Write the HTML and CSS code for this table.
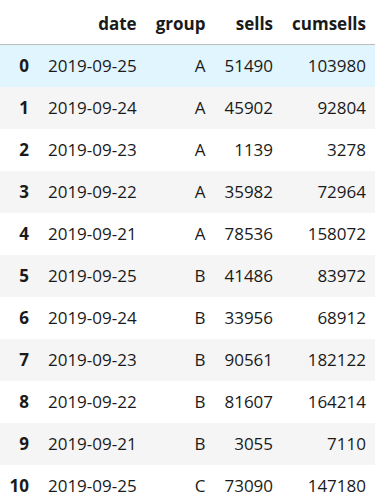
FILE: index.html
```html
<!DOCTYPE html>
<html>
<head>
<meta charset="utf-8">
<link rel="stylesheet" href="styles.css">
</head>
<body>
<table class="df">
  <thead>
    <tr><th></th><th>date</th><th>group</th><th>sells</th><th>cumsells</th></tr>
  </thead>
  <tbody>
    <tr class="hover"><th>0</th><td>2019-09-25</td><td>A</td><td>51490</td><td>103980</td></tr>
    <tr><th>1</th><td>2019-09-24</td><td>A</td><td>45902</td><td>92804</td></tr>
    <tr><th>2</th><td>2019-09-23</td><td>A</td><td>1139</td><td>3278</td></tr>
    <tr><th>3</th><td>2019-09-22</td><td>A</td><td>35982</td><td>72964</td></tr>
    <tr><th>4</th><td>2019-09-21</td><td>A</td><td>78536</td><td>158072</td></tr>
    <tr><th>5</th><td>2019-09-25</td><td>B</td><td>41486</td><td>83972</td></tr>
    <tr><th>6</th><td>2019-09-24</td><td>B</td><td>33956</td><td>68912</td></tr>
    <tr><th>7</th><td>2019-09-23</td><td>B</td><td>90561</td><td>182122</td></tr>
    <tr><th>8</th><td>2019-09-22</td><td>B</td><td>81607</td><td>164214</td></tr>
    <tr><th>9</th><td>2019-09-21</td><td>B</td><td>3055</td><td>7110</td></tr>
    <tr><th>10</th><td>2019-09-25</td><td>C</td><td>73090</td><td>147180</td></tr>
  </tbody>
</table>
</body>
</html>
```
FILE: styles.css
```css
html, body {
  margin: 0;
  padding: 0;
  background: #ffffff;
}
.df {
  border-collapse: collapse;
  border-spacing: 0;
  font-family: "Open Sans", "Noto Sans", sans-serif;
  font-size: 17px;
  color: #1a1a1a;
}
.df th, .df td {
  text-align: right;
  padding: 10px 9.5px;
  line-height: 22px;
  white-space: nowrap;
  vertical-align: middle;
}
.df th {
  font-weight: bold;
}
.df thead th {
  padding-top: 13px;
  padding-bottom: 9px;
  border-bottom: 1px solid #bdbdbd;
}
.df tbody tr:nth-child(even) {
  background: #f5f5f5;
}
.df tbody tr.hover {
  background: #e1f5fe;
}
```
